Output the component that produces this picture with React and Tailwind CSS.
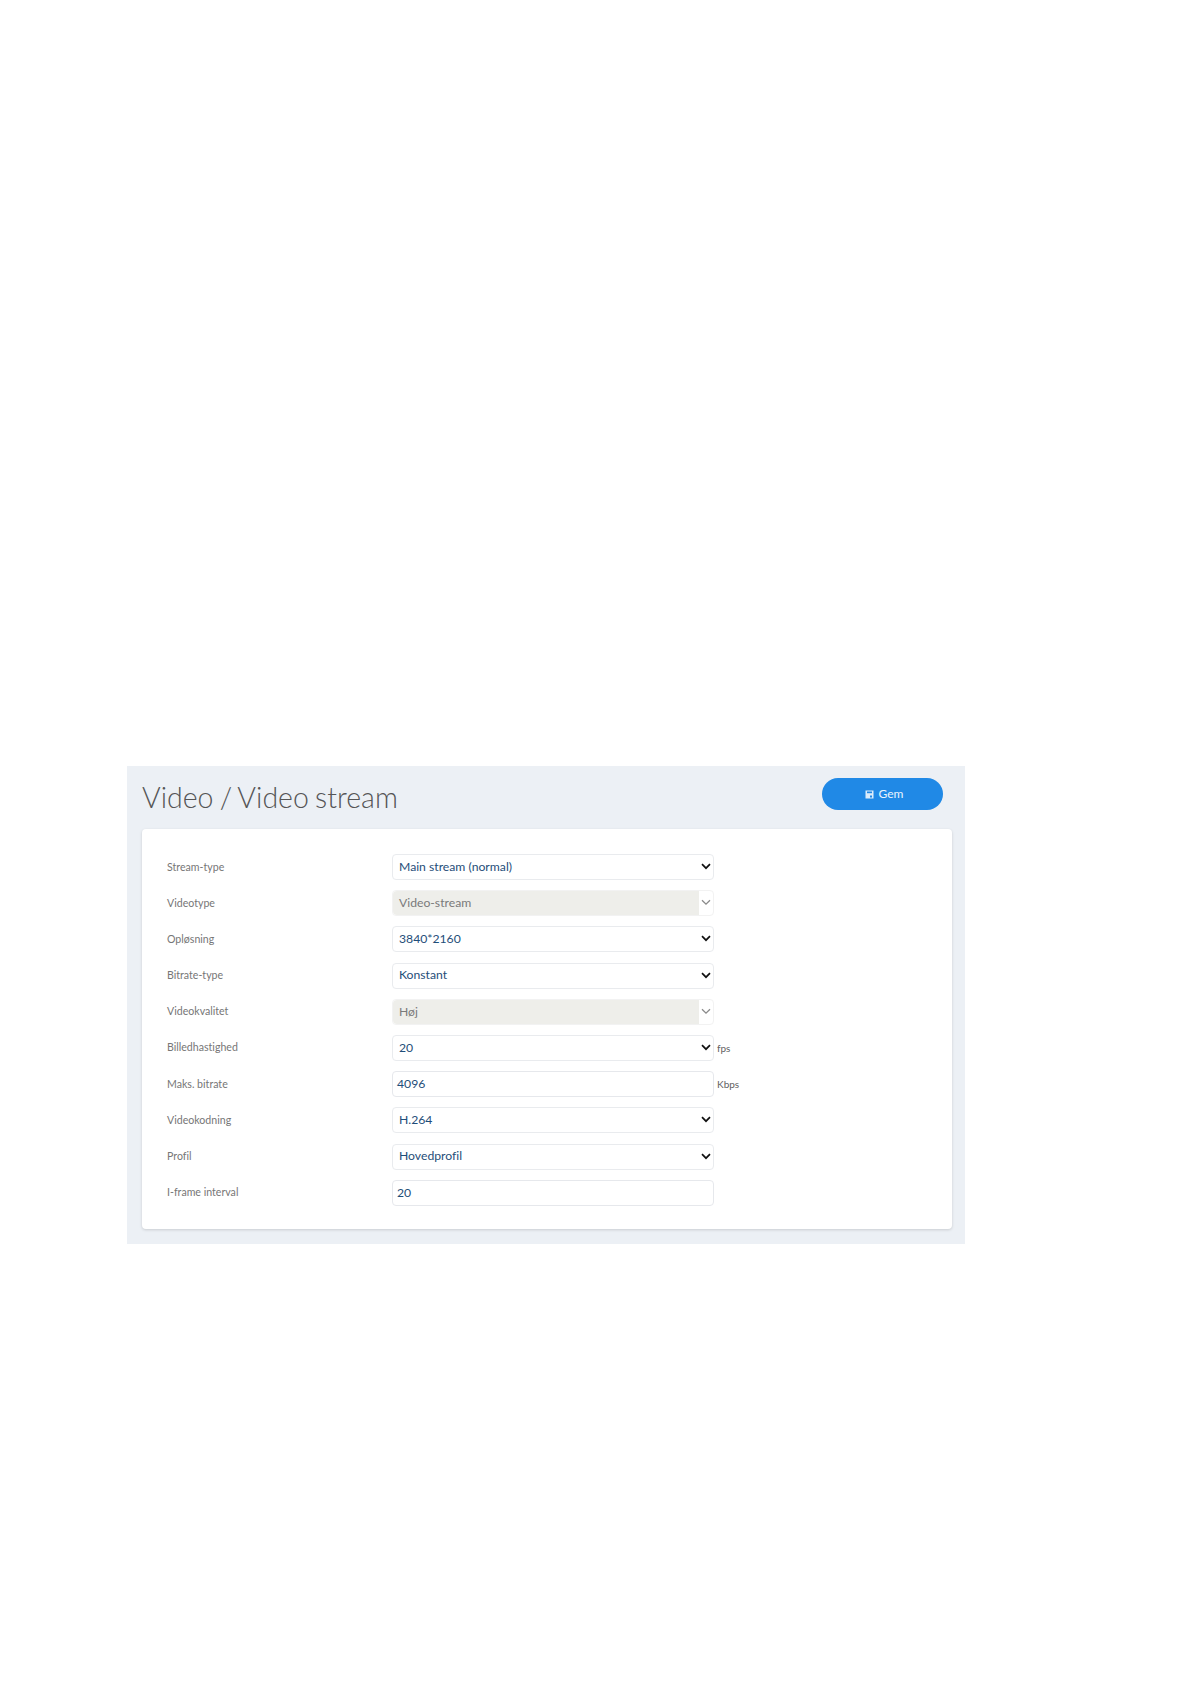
import React from 'react';

const ROWS = [
  { label: 'Stream-type', value: 'Main stream (normal)', type: 'select' },
  { label: 'Videotype', value: 'Video-stream', type: 'disabled' },
  { label: 'Opløsning', value: '3840*2160', type: 'select' },
  { label: 'Bitrate-type', value: 'Konstant', type: 'select' },
  { label: 'Videokvalitet', value: 'Høj', type: 'disabled' },
  { label: 'Billedhastighed', value: '20', type: 'select', unit: 'fps' },
  { label: 'Maks. bitrate', value: '4096', type: 'input', unit: 'Kbps' },
  { label: 'Videokodning', value: 'H.264', type: 'select' },
  { label: 'Profil', value: 'Hovedprofil', type: 'select' },
  { label: 'I-frame interval', value: '20', type: 'input' },
];

const Chevron = ({ muted }) => (
  <svg width="10" height="7" viewBox="0 0 10 7" fill="none" className={muted ? 'text-[#8a8a8a]' : 'text-[#111111]'}>
    <path d="M1 1.2L5 5.2L9 1.2" stroke="currentColor" strokeWidth={muted ? 1.3 : 1.7} />
  </svg>
);

const SaveIcon = () => (
  <svg width="9" height="9" viewBox="0 0 9 9" className="text-[#dcecfb]">
    <path d="M0.5 0.5H8.5V8.5H0.5Z" fill="currentColor" />
    <path d="M2 1.5H7V3.2H2Z" fill="#2089e6" />
    <path d="M5 5.5H7V7.5H5Z" fill="#2089e6" />
  </svg>
);

function Field({ row }) {
  if (row.type === 'disabled') {
    return (
      <div className="flex h-[26px] w-[322px] rounded border border-[#f2f2f2] bg-white">
        <div className="flex flex-1 items-center rounded-l bg-[#eeeeea] pl-[6px] text-[12.2px] text-[#7a7a7a]">{row.value}</div>
        <div className="-mt-[1px] flex w-[14px] items-center justify-center"><Chevron muted /></div>
      </div>
    );
  }
  if (row.type === 'input') {
    return (
      <div className="flex h-[26px] w-[322px] items-center rounded border border-[#e6e8ec] bg-white pl-[4px] text-[12.2px] text-[#1f4e79]">
        {row.value}
      </div>
    );
  }
  return (
    <div className="flex h-[26px] w-[322px] items-center justify-between rounded border border-[#e9ebee] bg-white pl-[6px] pr-[2px] text-[12.2px] text-[#1f4e79]">
      <span>{row.value}</span>
      <div className="-mt-[1px]"><Chevron /></div>
    </div>
  );
}

export default function App() {
  return (
    <div className="min-h-[1684px] bg-white pl-[127px] pt-[766px] font-['Lato',sans-serif] [font-variant-ligatures:none]">
      <div className="h-[478px] w-[838px] bg-[#ecf0f5] pl-[15px] pr-[13px]">
        {/* Header */}
        <div className="flex h-[63px] items-start justify-between pr-[9px]">
          <h1 className="mt-[13px] text-[28.5px] font-light leading-[36px] text-[#555555] [word-spacing:-1.5px]">Video / Video stream</h1>
          <button className="mt-[12px] flex h-[32px] w-[121px] items-center justify-center gap-[5px] rounded-full bg-[#2089e6] pl-[3px] text-[12px] text-[#eaf4fd]">
            <SaveIcon />
            Gem
          </button>
        </div>

        {/* Form */}
        <div className="flex h-[400px] flex-col gap-[10.2px] rounded bg-white pl-[25px] pt-[25px] shadow-[0_1px_3px_rgba(0,0,0,0.15)]">
          {ROWS.map(row => (
            <div key={row.label} className="flex items-center">
              <div className="w-[225px] text-[10.6px] leading-[15px] text-[#767676]">{row.label}</div>
              <Field row={row} />
              {row.unit && <span className="ml-[3px] mt-[1px] text-[10px] text-[#5f5f5f]">{row.unit}</span>}
            </div>
          ))}
        </div>
      </div>
    </div>
  );
}
